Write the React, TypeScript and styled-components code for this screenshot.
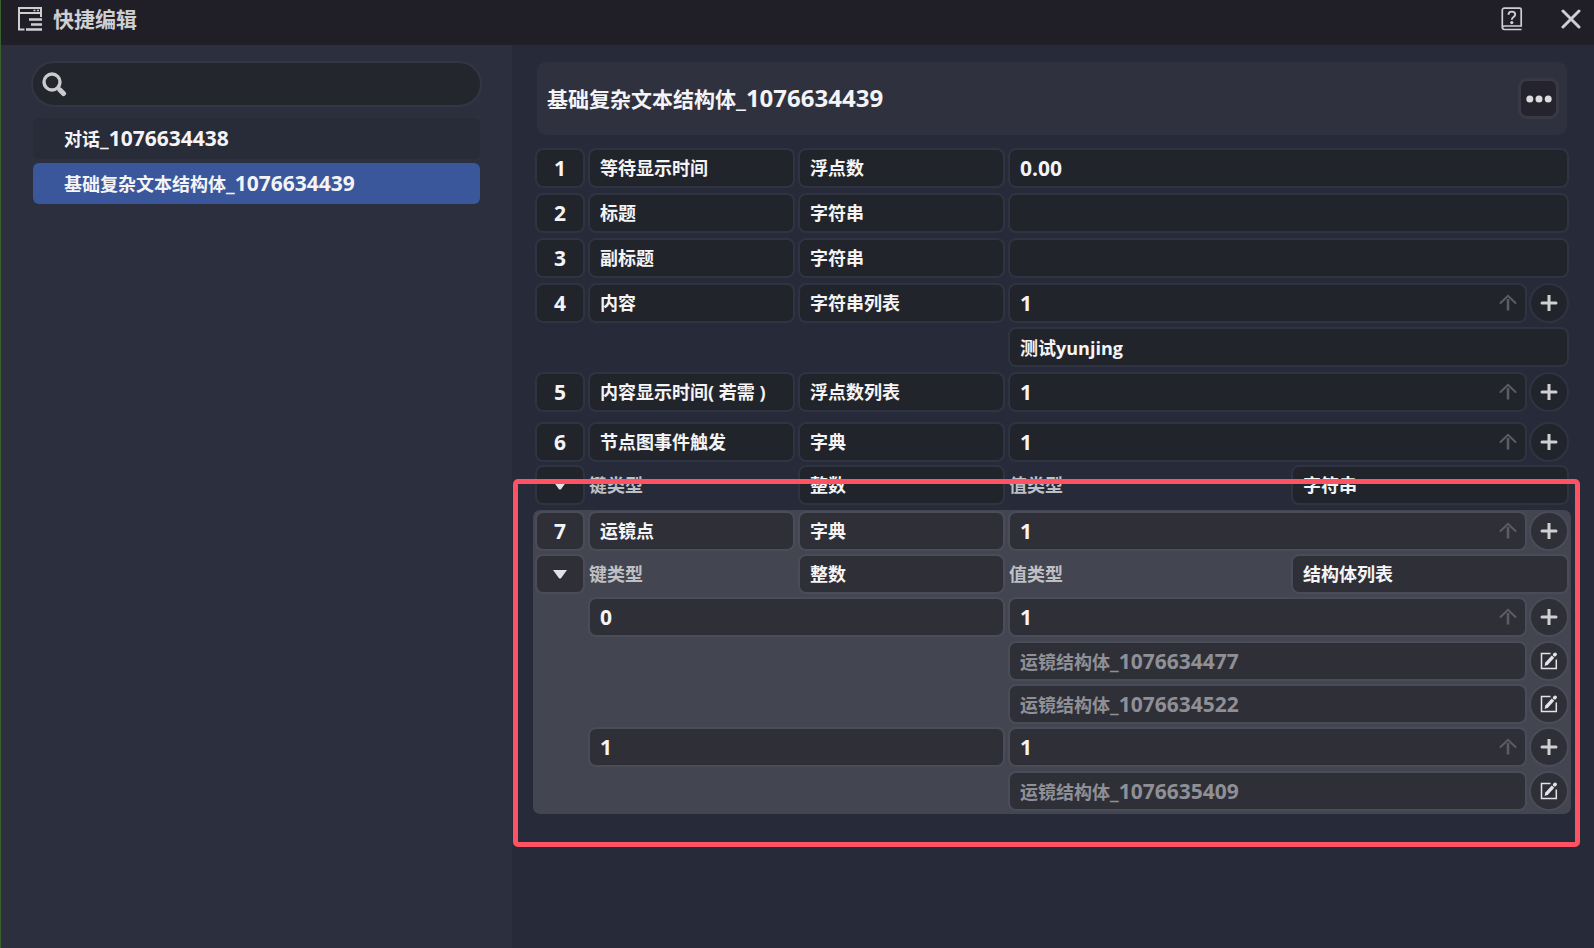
import React from 'react';
import styled, { createGlobalStyle } from 'styled-components';

const GlobalStyle = createGlobalStyle`
  *, *::before, *::after { box-sizing: border-box; }
  html, body, #root { height: 100%; }
  body {
    margin: 0;
    background: #272a38;
    color: #f4f4f6;
    font: 700 18px/24px "Open Sans", "Noto Sans CJK SC", sans-serif;
  }
  button, input { font: inherit; color: inherit; }
  button { cursor: pointer; }
`;

const Window = styled.div`
  min-height: 100%;
  display: flex;
  flex-direction: column;
  border-left: 1px solid #3a6030;
`;

const TitleBar = styled.header`
  display: flex;
  align-items: center;
  height: 45px;
  padding: 0 13px 8px 17px;
  background: #201f28;
  color: #cfcfd2;
`;

const WindowTitle = styled.h1`
  flex: 1;
  margin: 0 0 0 11px;
  font-size: 21px;
  line-height: 26px;
  font-weight: 700;
`;

const BarButton = styled.button`
  display: flex;
  padding: 0;
  border: 0;
  background: none;
  & + & { margin-left: 38px; }
`;

const Body = styled.div`
  flex: 1;
  display: flex;
`;

const Sidebar = styled.aside`
  width: 511px;
  flex: none;
  padding: 16px 30px;
  background: #2c2f3d;
`;

const SearchBox = styled.label`
  display: flex;
  align-items: center;
  height: 46px;
  padding: 0 16px 0 9px;
  border: 2px solid #343645;
  border-radius: 23px;
  background: #24262e;
  color: #cbcbcd;
`;

const TextInput = styled.input<{ $numeric?: boolean }>`
  flex: 1;
  min-width: 0;
  width: 100%;
  height: 100%;
  padding: 0;
  border: 0;
  outline: 0;
  background: none;
  font-size: ${(p) => (p.$numeric ? 21 : 18)}px;
`;

const StructList = styled.nav`
  display: flex;
  flex-direction: column;
  gap: 4px;
  padding: 11px 2px 0;
`;

const StructItem = styled.button<{ $active?: boolean }>`
  height: 41px;
  padding: 0 31px;
  border: 0;
  border-radius: 6px;
  text-align: left;
  background: ${(p) => (p.$active ? '#3b579b' : '#282b38')};
`;

const Main = styled.main`
  flex: 1;
  min-width: 0;
  padding: 17px 25px 24px 23px;
`;

const Heading = styled.div`
  display: flex;
  align-items: center;
  justify-content: space-between;
  height: 73px;
  margin: 0 2px 13px;
  padding: 0 8px 0 10px;
  border-radius: 9px;
  background: #2f323e;
`;

const HeadingText = styled.h2`
  margin: 0;
  font-size: 21px;
  line-height: 28px;
`;

const Digits = styled.span<{ $large?: boolean }>`
  font-size: ${(p) => (p.$large ? 24 : 21)}px;
`;

const MoreButton = styled.button`
  display: grid;
  place-items: center;
  width: 41px;
  height: 41px;
  padding: 0;
  border: 3px solid #373945;
  border-radius: 9px;
  background: #25242e;
  color: #dcdcde;
`;

const Fields = styled.div`
  display: flex;
  flex-direction: column;
  gap: 5px;
`;

const Entry = styled.section<{ $emptyList?: boolean }>`
  --cell: #22242c;
  --edge: #303341;
  display: flex;
  flex-direction: column;
  gap: 3px;
  padding-bottom: ${(p) => (p.$emptyList ? 5 : 0)}px;
`;

const SelectedEntry = styled(Entry)`
  --cell: #2f2f38;
  --edge: #4a4c58;
  position: relative;
  margin: 0 -2px;
  padding: 1px 2px 3px;
  border-radius: 7px;
  background: #434550;
`;

const Callout = styled.div`
  position: absolute;
  inset: -31px -9px -33px -20px;
  border: 5px solid #ff5364;
  border-radius: 5px;
  pointer-events: none;
`;

const Row = styled.div`
  display: grid;
  grid-template-columns: 50px 207px 207px minmax(0, 1fr);
  gap: 3px;
  & > :only-child { grid-column: 4; }
`;

const Cell = styled.div<{ $center?: boolean }>`
  display: flex;
  align-items: center;
  justify-content: ${(p) => (p.$center ? 'center' : 'flex-start')};
  flex: 1;
  min-width: 0;
  height: 40px;
  padding: ${(p) => (p.$center ? 0 : '0 8px 0 10px')};
  border: 2px solid var(--edge);
  border-radius: 8px;
  background: var(--cell);
  white-space: nowrap;
`;

const FieldName = styled(Cell).attrs({ as: 'label' })<{ htmlFor?: string }>``;

const FoldButton = styled(Cell).attrs({ as: 'button', type: 'button' })`
  color: #e2e2e4;
`;

const KeyCell = styled(Cell)`
  grid-column: 2 / 4;
`;

const ReferenceCell = styled(Cell)`
  color: #8f9096;
`;

const TypeLabel = styled.span`
  align-self: center;
  padding-left: 1px;
  color: #bfc0c6;
`;

const TypePair = styled.div`
  display: grid;
  grid-template-columns: 1fr 1fr;
  gap: 5px;
`;

const ValueGroup = styled.div`
  display: flex;
  gap: 2px;
`;

const Items = styled.div`
  display: flex;
  flex-direction: column;
  gap: 3px;
  padding-top: 1px;
`;

const RoundButton = styled.button`
  display: grid;
  place-items: center;
  flex: none;
  width: 40px;
  height: 40px;
  padding: 0;
  border: 2px solid var(--edge);
  border-radius: 50%;
  background: var(--cell);
  color: #d0d0d2;
`;

const ArrowButton = styled.button`
  display: flex;
  padding: 0;
  border: 0;
  background: none;
  color: #5a5c66;
`;

const PanelIcon = () => (
  <svg width="24" height="24" viewBox="0 0 24 24" fill="none" stroke="currentColor" strokeWidth="2" aria-hidden="true">
    <path d="M6.500 22.500H1V1H23V10M1 6H23" />
    <path d="M15.500 3.500h2M19 3.500h2" strokeWidth="1.500" />
    <path d="M11 12.500h13M13 17.500h11M8 22.500h16" strokeWidth="2.600" />
  </svg>
);

const HelpIcon = () => (
  <svg width="22" height="24" viewBox="0 0 22 24" fill="none" stroke="currentColor" strokeWidth="1.700" aria-hidden="true">
    <path d="M20.500 22.500H3.500a2.200 2.200 0 0 1-2.200-2.200V3a1.800 1.800 0 0 1 1.800-1.800H18.700a1.500 1.500 0 0 1 1.500 1.500V19H3.500a2 2 0 0 0-2 1.500" />
    <path d="M7.500 7.800c0-2 1.400-3.200 3.300-3.200s3.400 1.100 3.400 2.900c0 2.500-3.400 2.600-3.400 5.200" strokeWidth="1.900" />
    <circle cx="10.800" cy="15.600" r="1.600" fill="currentColor" stroke="none" />
  </svg>
);

const CloseIcon = () => (
  <svg width="20" height="20" viewBox="0 0 20 20" fill="none" stroke="currentColor" strokeWidth="3" strokeLinecap="round" aria-hidden="true">
    <path d="M2 2L18 18M18 2L2 18" />
  </svg>
);

const SearchIcon = () => (
  <svg width="26" height="26" viewBox="0 0 26 26" fill="none" stroke="currentColor" aria-hidden="true">
    <circle cx="10" cy="11" r="8" strokeWidth="3.400" />
    <path d="M15.500 16.500l2 2" strokeWidth="3" />
    <path d="M18 19l3.500 3.500" strokeWidth="5" strokeLinecap="round" />
  </svg>
);

const DotsIcon = () => (
  <svg width="26" height="8" viewBox="0 0 26 8" fill="currentColor" aria-hidden="true">
    <circle cx="3.800" cy="4" r="3.500" />
    <circle cx="13" cy="4" r="3.500" />
    <circle cx="22.200" cy="4" r="3.500" />
  </svg>
);

const ArrowUpIcon = () => (
  <svg width="18" height="18" viewBox="0 0 18 18" fill="none" stroke="currentColor" strokeWidth="2" strokeLinecap="round" aria-hidden="true">
    <path d="M1.500 9L9 1.800L16.500 9" />
    <path d="M9 5V16.500" strokeWidth="2.600" strokeLinecap="butt" />
  </svg>
);

const PlusIcon = () => (
  <svg width="18" height="18" viewBox="0 0 18 18" stroke="currentColor" strokeWidth="3" aria-hidden="true">
    <path d="M2 9H16" strokeLinecap="round" />
    <path d="M9 1V17" />
  </svg>
);

const EditIcon = () => (
  <svg width="18" height="18" viewBox="0 0 18 18" fill="none" stroke="#e4e4e6" strokeWidth="1.500" aria-hidden="true">
    <path d="M10.500 1.500H1.500V16.500H16.300V7.500" />
    <path d="M6.200 12.200L13 4.600" strokeWidth="3.400" />
    <path d="M4.600 14l.7-3.600 2.600 2.300z" fill="#e4e4e6" stroke="none" />
    <path d="M14.700 2.700l.4-.4" strokeWidth="3.600" strokeLinecap="round" />
  </svg>
);

const FoldIcon = () => (
  <svg width="14" height="9" viewBox="0 0 14 9" fill="currentColor" aria-hidden="true">
    <path d="M0 0H14L8 8.200Q7 9 6 8.200Z" />
  </svg>
);

/* A struct's name followed by its id, with the id in the numeral size. */
const StructName = ({ name, id, large }: { name: string; id: number; large?: boolean }) => (
  <span>
    {name}
    <Digits $large={large}>_{id}</Digits>
  </span>
);

const ListCount = ({ id, label }: { id?: string; label?: string }) => (
  <ValueGroup>
    <Cell>
      <TextInput $numeric id={id} aria-label={label} defaultValue="1" />
      <ArrowButton type="button" aria-label="上移">
        <ArrowUpIcon />
      </ArrowButton>
    </Cell>
    <RoundButton type="button" aria-label="添加">
      <PlusIcon />
    </RoundButton>
  </ValueGroup>
);

const FieldRow = ({ index, name, type, value }: { index: number; name: string; type: string; value?: string }) => {
  const id = `field-${index}`;
  return (
    <Row>
      <Cell $center>
        <Digits>{index}</Digits>
      </Cell>
      <FieldName htmlFor={id}>{name}</FieldName>
      <Cell>{type}</Cell>
      {value === undefined ? (
        <ListCount id={id} />
      ) : (
        <Cell>
          <TextInput $numeric={value !== ''} id={id} defaultValue={value} />
        </Cell>
      )}
    </Row>
  );
};

const TypesRow = ({ keyType, valueType }: { keyType: string; valueType: string }) => (
  <Row>
    <FoldButton $center aria-label="折叠">
      <FoldIcon />
    </FoldButton>
    <TypeLabel>键类型</TypeLabel>
    <Cell>{keyType}</Cell>
    <TypePair>
      <TypeLabel>值类型</TypeLabel>
      <Cell>{valueType}</Cell>
    </TypePair>
  </Row>
);

const KeyRows = ({ name, structs }: { name: string; structs: number[] }) => (
  <>
    <Row>
      <KeyCell>
        <TextInput $numeric aria-label="键" defaultValue={name} />
      </KeyCell>
      <ListCount label="值" />
    </Row>
    <Items>
      {structs.map((struct) => (
        <Row key={struct}>
          <ValueGroup>
            <ReferenceCell>
              <StructName name="运镜结构体" id={struct} />
            </ReferenceCell>
            <RoundButton type="button" aria-label="编辑">
              <EditIcon />
            </RoundButton>
          </ValueGroup>
        </Row>
      ))}
    </Items>
  </>
);

export default function App() {
  return (
    <Window>
      <GlobalStyle />
      <TitleBar>
        <PanelIcon />
        <WindowTitle>快捷编辑</WindowTitle>
        <BarButton type="button" aria-label="帮助">
          <HelpIcon />
        </BarButton>
        <BarButton type="button" aria-label="关闭">
          <CloseIcon />
        </BarButton>
      </TitleBar>
      <Body>
        <Sidebar>
          <SearchBox>
            <SearchIcon />
            <TextInput type="text" aria-label="搜索" />
          </SearchBox>
          <StructList>
            <StructItem type="button">
              <StructName name="对话" id={1076634438} />
            </StructItem>
            <StructItem type="button" $active>
              <StructName name="基础复杂文本结构体" id={1076634439} />
            </StructItem>
          </StructList>
        </Sidebar>
        <Main>
          <Heading>
            <HeadingText>
              <StructName name="基础复杂文本结构体" id={1076634439} large />
            </HeadingText>
            <MoreButton type="button" aria-label="更多">
              <DotsIcon />
            </MoreButton>
          </Heading>
          <Fields>
            <Entry>
              <FieldRow index={1} name="等待显示时间" type="浮点数" value="0.00" />
            </Entry>
            <Entry>
              <FieldRow index={2} name="标题" type="字符串" value="" />
            </Entry>
            <Entry>
              <FieldRow index={3} name="副标题" type="字符串" value="" />
            </Entry>
            <Entry>
              <FieldRow index={4} name="内容" type="字符串列表" />
              <Items>
                <Row>
                  <Cell>
                    <TextInput aria-label="内容 1" defaultValue="测试yunjing" />
                  </Cell>
                </Row>
              </Items>
            </Entry>
            <Entry $emptyList>
              <FieldRow index={5} name="内容显示时间( 若需 )" type="浮点数列表" />
            </Entry>
            <Entry>
              <FieldRow index={6} name="节点图事件触发" type="字典" />
              <TypesRow keyType="整数" valueType="字符串" />
            </Entry>
            <SelectedEntry>
              <FieldRow index={7} name="运镜点" type="字典" />
              <TypesRow keyType="整数" valueType="结构体列表" />
              <KeyRows name="0" structs={[1076634477, 1076634522]} />
              <KeyRows name="1" structs={[1076635409]} />
              <Callout />
            </SelectedEntry>
          </Fields>
        </Main>
      </Body>
    </Window>
  );
}
